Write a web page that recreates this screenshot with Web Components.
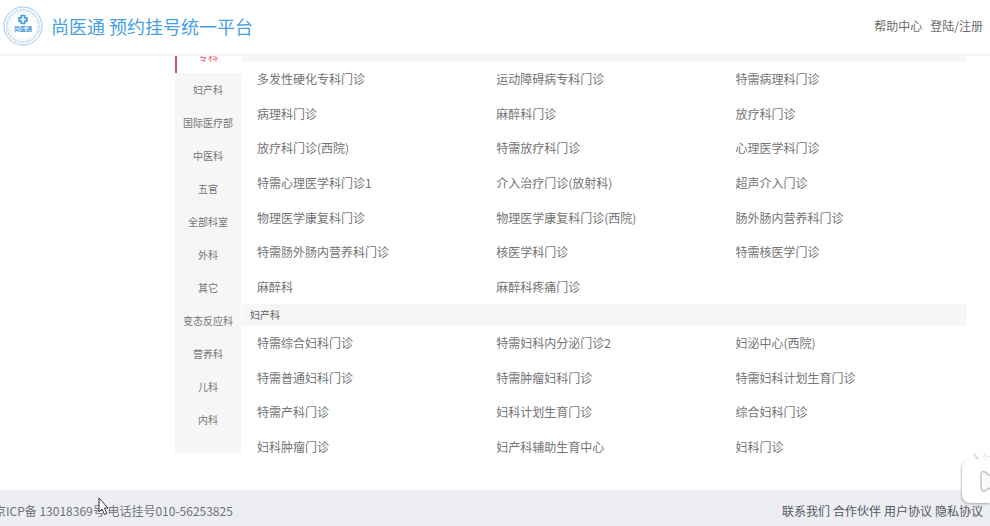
<!DOCTYPE html>
<html lang="zh-CN">
<head>
<meta charset="utf-8">
<meta name="viewport" content="width=device-width, initial-scale=1">
<title>尚医通 预约挂号统一平台</title>
<style>
body { margin: 0; background: #fff; color: #747474; font: 12px/20px "Noto Sans CJK SC", sans-serif; }
</style>
</head>
<body>
<booking-page></booking-page>
<script>
const define = (name, html, setup) => customElements.define(name, class extends HTMLElement {
  connectedCallback() {
    if (this.shadowRoot) return;
    const template = document.createElement('template');
    template.innerHTML = html;
    this.attachShadow({ mode: 'open' }).append(template.content.cloneNode(true));
    if (setup) setup(this, this.shadowRoot);
  }
});

define('brand-logo', `
<style>
:host { display: block; width: 40px; height: 40px; }
svg { display: block; }
text { font: bold 6px "Noto Sans CJK SC", sans-serif; fill: #3d97dc; }
</style>
<svg width="40" height="40" viewBox="0 0 40 40" aria-hidden="true">
  <g fill="none" stroke="#a4cbe9">
    <circle cx="20" cy="20" r="19" stroke="#9fc6e6"/>
    <circle cx="20" cy="20" r="16" stroke="#c3dcef" stroke-width="2.4" stroke-dasharray="1.6 .7 .8 .9 2 .8"/>
    <circle cx="20" cy="20" r="13.4" stroke="#d3e6f4" stroke-width=".5"/>
  </g>
  <path d="M18.3 9.5h3.4v2.3H24v3.4h-2.3v2.3h-3.4v-2.3H16v-3.4h2.3z" fill="#e9f5ff" stroke="#429fe4" stroke-width="1.7" stroke-linejoin="round"/>
  <text x="20" y="25" text-anchor="middle">尚医通</text>
</svg>`);

define('site-header', `
<style>
:host { display: flex; align-items: center; justify-content: space-between; box-sizing: border-box; height: 56px; padding: 0 7px 2px 3px; background: #fff; border-bottom: 3px solid #f8f8f8; position: relative; z-index: 1; }
.brand, nav { display: flex; align-items: center; gap: 8px; }
h1 { margin: 0; font-size: 18px; line-height: 28px; font-weight: 400; color: #459fe3; }
nav { color: #6c6c6c; }
a { color: inherit; text-decoration: none; }
</style>
<div class="brand"><brand-logo></brand-logo><h1>尚医通 预约挂号统一平台</h1></div>
<nav><a href="#help">帮助中心</a><a href="#login">登陆/注册</a></nav>`);

define('category-item', `
<style>
:host { display: block; }
button { display: block; width: 100%; height: 33px; padding: 0; border: 0; border-left: 2px solid transparent; border-right: 2px solid transparent; background: none; color: inherit; font: inherit; font-size: 10px; white-space: nowrap; }
:host([active]) button { background: #fff; color: #df5870; border-left-color: #ce5870; }
</style>
<button type="button"><slot></slot></button>`);

define('category-nav', `
<style>
:host { display: block; box-sizing: border-box; padding-bottom: 17px; background: #f6f6f6; }
</style>
<slot></slot>`);

define('department-section', `
<style>
:host { display: block; }
h2 { margin: 0; padding: 0 8px; height: 22px; font-size: 10px; line-height: 22px; font-weight: 400; color: #606060; background: #f6f6f6; border-radius: 2px; }
.list { display: grid; grid-template-columns: repeat(3, 33%); grid-auto-rows: 1fr; min-height: var(--list-height); align-items: center; }
::slotted(a) { padding-left: 15px; color: inherit; text-decoration: none; }
</style>
<h2></h2><div class="list"><slot></slot></div>`,
(host, root) => { root.querySelector('h2').textContent = host.getAttribute('heading'); });

define('site-footer', `
<style>
:host { display: flex; justify-content: space-between; box-sizing: border-box; height: 36px; padding: 11px 7px 0 0; background: #eceef4; color: #707276; white-space: nowrap; overflow: hidden; }
p { margin: 0 0 0 -6px; }
nav { display: flex; gap: 3px; color: #55575c; }
a { color: inherit; text-decoration: none; }
</style>
<p>京ICP备 13018369号 电话挂号010-56253825</p>
<nav><a href="#contact">联系我们</a><a href="#partner">合作伙伴</a><a href="#terms">用户协议</a><a href="#privacy">隐私协议</a></nav>`);

define('player-badge', `
<style>
:host { display: block; position: absolute; right: 0; bottom: 16px; z-index: 2; }
button { display: block; padding: 0; border: 0; background: none; }
svg { display: block; }
</style>
<button type="button" aria-label="播放"><svg width="34" height="62" viewBox="0 0 34 62">
  <defs><filter id="shade" x="-20%" y="-20%" width="150%" height="150%"><feDropShadow dx="-.5" dy="1" stdDeviation="1.2" flood-color="#777" flood-opacity=".6"/></filter></defs>
  <g filter="url(#shade)" fill="#fff">
    <path d="M20 4q2-1 4 2l5 7h5v42H16Q6 55 6 46V21Q6 11 16 11h7l-4-5z"/>
  </g>
  <path d="M34 28l-5-4q-4-2-4 3v12q0 5 4 4l5-3" fill="#fafafa" stroke="#c5c5c5" stroke-width="1.5"/>
  <path d="M28 6l3 4 3-2" fill="none" stroke="#ddd"/>
</svg></button>`);

define('mouse-pointer', `
<style>
:host { display: block; position: absolute; left: 98px; bottom: 10px; z-index: 2; pointer-events: none; }
svg { display: block; }
</style>
<svg width="12" height="19" viewBox="0 0 12 19" aria-hidden="true"><path d="M1 1v14l3-3 2.5 5.5 2.3-1L6.5 11H10z" fill="#fff" stroke="#333" stroke-width="1"/></svg>`);

const categories = ['专科', '妇产科', '国际医疗部', '中医科', '五官', '全部科室', '外科', '其它', '变态反应科', '营养科', '儿科', '内科'];
const special = ['多发性硬化专科门诊', '运动障碍病专科门诊', '特需病理科门诊', '病理科门诊', '麻醉科门诊', '放疗科门诊', '放疗科门诊(西院)', '特需放疗科门诊', '心理医学科门诊', '特需心理医学科门诊1', '介入治疗门诊(放射科)', '超声介入门诊', '物理医学康复科门诊', '物理医学康复科门诊(西院)', '肠外肠内营养科门诊', '特需肠外肠内营养科门诊', '核医学科门诊', '特需核医学门诊', '麻醉科', '麻醉科疼痛门诊'];
const women = ['特需综合妇科门诊', '特需妇科内分泌门诊2', '妇泌中心(西院)', '特需普通妇科门诊', '特需肿瘤妇科门诊', '特需妇科计划生育门诊', '特需产科门诊', '妇科计划生育门诊', '综合妇科门诊', '妇科肿瘤门诊', '妇产科辅助生育中心', '妇科门诊'];
const links = names => names.map(name => `<a href="#department">${name}</a>`).join('');

define('booking-page', `
<style>
:host { display: flex; flex-direction: column; min-height: 100vh; position: relative; overflow: hidden; }
main { flex: 1; display: grid; grid-template-columns: 66px 1fr; column-gap: 1px; align-items: start; padding: 0 23px 0 175px; margin-top: -16px; }
.special { --list-height: 242px; }
.women { --list-height: 138px; }
</style>
<site-header></site-header>
<main>
  <category-nav>${categories.map((name, i) => `<category-item${i ? '' : ' active'}>${name}</category-item>`).join('')}</category-nav>
  <div>
    <department-section class="special" heading="专科">${links(special)}</department-section>
    <department-section class="women" heading="妇产科">${links(women)}</department-section>
  </div>
</main>
<site-footer></site-footer>
<player-badge></player-badge>
<mouse-pointer></mouse-pointer>`);
</script>
</body>
</html>
